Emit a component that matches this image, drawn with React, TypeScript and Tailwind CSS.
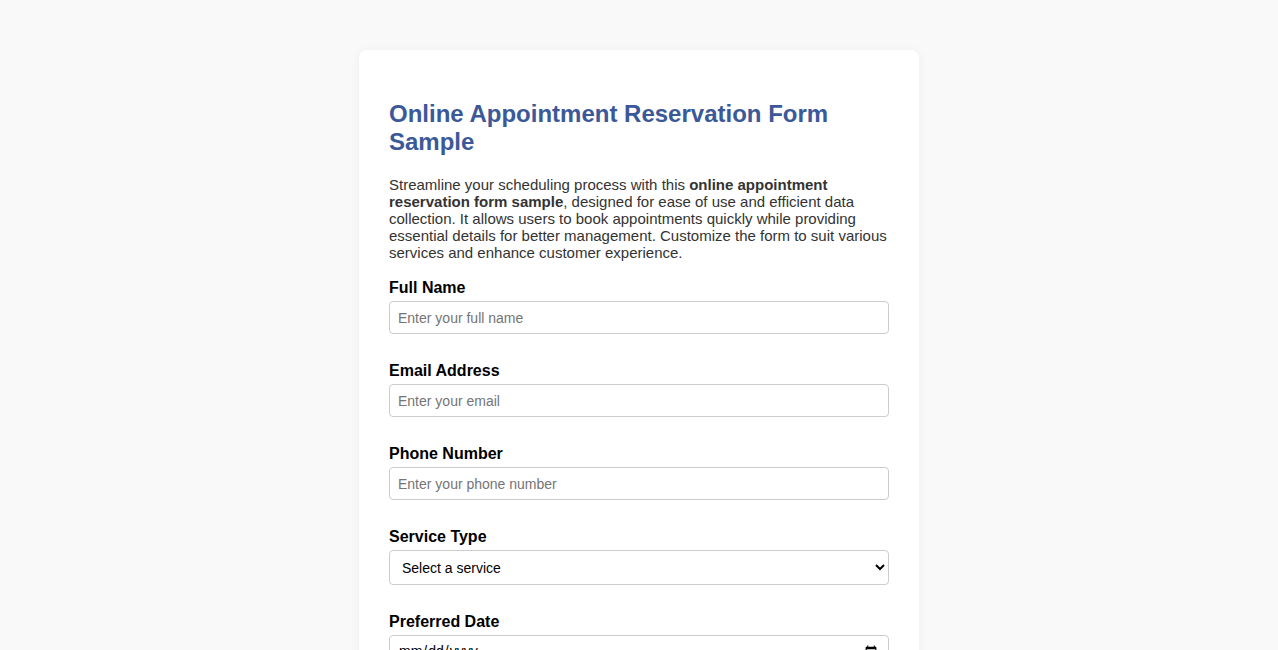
import React from "react";

const Field = ({
  label,
  children,
}: {
  label: string;
  children: React.ReactNode;
}) => (
  <div className="mb-[28px]">
    <label className="block mb-[4px] text-[16px] leading-[18px] font-bold text-black">
      {label}
    </label>
    {children}
  </div>
);

const inputCls =
  "block w-full h-[33px] px-2 border border-[#ccc] rounded-[4px] bg-white text-[14px] text-black placeholder:text-[#757575] outline-none";

const App = () => {
  return (
    <div className="min-h-screen bg-[#f9f9f9] pt-[50px] font-['Liberation_Sans',Arial,sans-serif]">
      <div className="mx-auto w-[560px] bg-white rounded-[8px] shadow-[0_0_10px_rgba(0,0,0,0.05)] p-[30px]">
        <h1 className="mt-5 mb-5 text-[24px] leading-[28px] font-bold text-[#3b5998]">
          Online Appointment Reservation Form Sample
        </h1>
        <p className="mb-[18px] text-[15px] leading-[17px] text-[#333]">
          Streamline your scheduling process with this{" "}
          <strong>online appointment reservation form sample</strong>, designed
          for ease of use and efficient data collection. It allows users to book
          appointments quickly while providing essential details for better
          management. Customize the form to suit various services and enhance
          customer experience.
        </p>
        <form>
          <Field label="Full Name">
            <input type="text" placeholder="Enter your full name" className={inputCls} />
          </Field>
          <Field label="Email Address">
            <input type="email" placeholder="Enter your email" className={inputCls} />
          </Field>
          <Field label="Phone Number">
            <input type="tel" placeholder="Enter your phone number" className={inputCls} />
          </Field>
          <Field label="Service Type">
            <select
              defaultValue=""
              className="block w-full h-[35px] px-2 border border-[#ccc] rounded-[4px] bg-white text-[14px] text-black outline-none"
            >
              <option value="">Select a service</option>
              <option>Consultation</option>
              <option>Follow-up</option>
              <option>Check-up</option>
            </select>
          </Field>
          <Field label="Preferred Date">
            <input type="date" className={inputCls} />
          </Field>
          <Field label="Preferred Time">
            <input type="time" className={inputCls} />
          </Field>
        </form>
      </div>
    </div>
  );
};

export default App;
